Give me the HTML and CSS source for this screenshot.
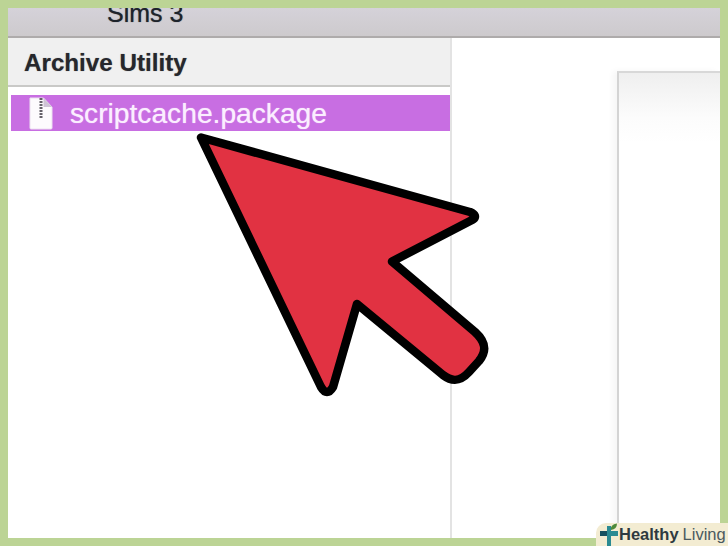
FILE: index.html
```html
<!DOCTYPE html>
<html lang="en">
<head>
<meta charset="utf-8">
<title>Archive Utility</title>
<link rel="stylesheet" href="styles.css">
</head>
<body>
<div class="frame">
  <header class="titlebar"><span class="title">Sims 3</span></header>
  <div class="content">
    <aside class="sidebar">
      <div class="side-head">Archive Utility</div>
      <div class="file-row">
        <svg class="file-icon" width="24" height="33" viewBox="0 0 24 33">
          <path d="M1 1H14.500L23 10V31Q23 32 22 32H2Q1 32 1 31Z" fill="#fdfbfd" stroke="#ece0f0" stroke-width="1"/>
          <path d="M14.500 1V10H23Z" fill="#cfc4d6"/>
          <path d="M12 1V22" stroke="#66626a" stroke-width="3" stroke-dasharray="2 1"/>
        </svg>
        <span class="file-name">scriptcache.package</span>
      </div>
    </aside>
    <main class="pane">
      <div class="dialog"></div>
    </main>
  </div>
</div>
<svg class="arrow" width="728" height="546" viewBox="0 0 728 546">
  <path d="M201 137.500L470 212Q478 215.500 473 219.500L392 261.500L475 332C486 342 487 351 479 361L469 372C459 383 451 381 443 375L357 304L333 387Q327 397 321 387Z" fill="#e13242" stroke="#000" stroke-width="8.500" stroke-linejoin="round"/>
</svg>
<div class="badge">
  <svg class="badge-logo" width="22" height="23" viewBox="0 0 22 23">
    <path d="M3 8H10V3H12V23H10V13H3Z" fill="#17505f"/>
    <path d="M10 3H14V8H21V13H14V23H10Z" fill="#2a8a92"/>
    <path d="M14 7Q13 1.500 20 0.500Q20 6 14 7Z" fill="#4d8a3a"/>
  </svg>
  <span class="brand-a">Healthy</span><span class="brand-b">Living</span>
</div>
</body>
</html>
```
FILE: styles.css
```css
* { box-sizing: border-box; }
html, body { margin: 0; padding: 0; }
body {
  width: 728px;
  height: 546px;
  overflow: hidden;
  background: #bcd495;
  font-family: "Liberation Sans", Arial, sans-serif;
  position: relative;
}
.frame {
  width: 728px;
  height: 546px;
  padding: 8px;
  display: flex;
  flex-direction: column;
}
.titlebar {
  height: 30px;
  flex: none;
  background: linear-gradient(#d5d2d9, #cdcacd);
  border-bottom: 2px solid #aeabab;
  overflow: hidden;
  padding-left: 99px;
  display: flex;
  align-items: flex-end;
}
.title {
  font-size: 25px;
  line-height: 28px;
  margin-bottom: 9px;
  color: #1d232b;
  text-shadow: 0 0 1px rgba(29,35,43,0.7);
}
.content {
  flex: 1;
  display: flex;
  background: #fff;
  min-height: 0;
}
.sidebar {
  width: 444px;
  flex: none;
  border-right: 2px solid #e3e3e3;
  background: #fff;
  padding-left: 3px;
}
.side-head {
  height: 49px;
  margin-left: -3px;
  padding-left: 16px;
  background: #f0f0f0;
  border-bottom: 2px solid #c9c9c7;
  font-size: 24.200px;
  font-weight: 700;
  line-height: 49px;
  color: #26272c;
  text-shadow: 0 0 1px rgba(38,39,44,0.5);
}
.file-row {
  margin-top: 8px;
  height: 36px;
  background: #c86ee2;
  display: flex;
  align-items: center;
  padding-left: 18px;
  gap: 17px;
}
.file-icon { flex: none; }
.file-name {
  color: #fbeeff;
  font-size: 28.200px;
  line-height: 36px;
  text-shadow: 0 0 1px rgba(251,238,255,0.8);
}
.pane {
  flex: 1;
  padding: 33px 0 0 165px;
  display: flex;
}
.dialog {
  flex: 1;
  border-left: 2px solid #d4d4d4;
  border-top: 2px solid #d8d8d8;
  background: linear-gradient(#efefef, #fcfcfc 45px, #fff 70px);
  box-shadow: -4px 0 6px rgba(0,0,0,0.04);
}
.arrow { position: absolute; left: 0; top: 0; }
.badge {
  position: absolute;
  right: 0;
  bottom: 0;
  width: 132px;
  height: 23px;
  background: #f3ecd2;
  border-top-left-radius: 10px;
  display: flex;
  align-items: center;
  padding-left: 1px;
  font-size: 16.500px;
  white-space: nowrap;
}
.badge-logo { flex: none; }
.brand-a { font-weight: 700; color: #2e3a40; }
.brand-b { color: #4b5a60; margin-left: 4px; }
```
